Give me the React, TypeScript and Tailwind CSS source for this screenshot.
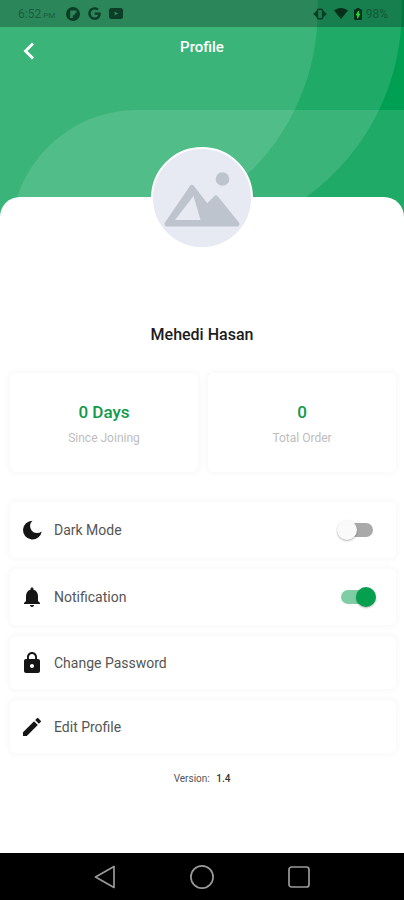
import { useState } from "react";
import type { ReactNode } from "react";
import { FaGoogle } from "react-icons/fa";
import { MdEdit, MdLock, MdNotifications } from "react-icons/md";

function StatusBar() {
  return (
    <div className="flex h-[27px] items-center justify-between bg-black/25 pl-[18px] pr-4 text-[#0c3d26]">
      <div className="flex items-center">
        <span className="w-12 text-xs text-[#1b5c3d]">
          6:52<span className="text-[8px]"> PM</span>
        </span>
        <svg viewBox="0 0 14 14" className="h-[14px] w-[14px]" aria-hidden="true">
          <circle cx="7" cy="7" r="7" fill="currentColor" />
          <path d="M4.2 11V3.6h6.3v2.6H8.7v2.1H6.8V11z" fill="#2c8659" />
        </svg>
        <FaGoogle className="ml-2 h-[13px] w-[13px]" />
        <svg viewBox="0 0 14 11" className="ml-2 h-[11px] w-[14px]" aria-hidden="true">
          <rect width="14" height="11" rx="2.5" fill="currentColor" />
          <path d="M5.6 3.4v4.2l3.6-2.1z" fill="#2c8659" />
        </svg>
      </div>
      <div className="flex items-center">
        <svg viewBox="0 0 14 12" className="h-3 w-[14px]" aria-hidden="true">
          <path d="M4.200 2.300V9.700L.2 6zM9.800 2.300V9.700L13.800 6z" fill="currentColor" />
          <rect x="4.400" y="1.200" width="5.200" height="9.600" rx="1.400" fill="none" stroke="currentColor" strokeWidth="1.600" />
        </svg>
        <svg viewBox="0 0 14 11" className="ml-[7px] h-[11px] w-[14px]" aria-hidden="true">
          <path d="M7 11L0 2.600C2 .9 4.400 0 7 0s5 .9 7 2.600z" fill="#06301b" />
        </svg>
        <svg viewBox="0 0 8 12" className="ml-[6px] h-3 w-2" aria-hidden="true">
          <path d="M2.500 0h3v1.300H7a1 1 0 0 1 1 1V11a1 1 0 0 1-1 1H1a1 1 0 0 1-1-1V2.300a1 1 0 0 1 1-1h1.500z" fill="#06301b" />
          <path d="M4.500 3L2.200 7h1.400v3.200L5.900 6H4.500z" fill="#20e22e" stroke="#20e22e" strokeWidth=".8" />
        </svg>
        <span className="ml-1 text-xs text-[#125a38]">98%</span>
      </div>
    </div>
  );
}

function Header() {
  return (
    <header className="relative h-[217px] overflow-hidden bg-[#009f52]">
      {/* decorative overlapping shapes */}
      <svg className="absolute inset-0 h-full w-full" viewBox="0 0 404 217" preserveAspectRatio="xMidYMin slice" aria-hidden="true">
        <g fill="#fff" fillOpacity=".12">
          <path d="M0 0H401.500A230 230 0 0 1 309 195L280 217H0z" />
          <path d="M0 0H317.500A227 227 0 0 1 252 170L190 217H0z" />
          <rect x="11" y="110" width="600" height="300" rx="126" />
        </g>
      </svg>
      <div className="relative">
        <StatusBar />
        <div className="grid grid-cols-[1fr_auto_1fr] px-5 pt-2">
          <button type="button" aria-label="Back" className="mt-[7px] flex h-[18px] w-[18px] items-center justify-center text-white">
            <svg viewBox="0 0 18 18" className="h-[18px] w-[18px]" fill="none" stroke="currentColor" strokeWidth="2.800" aria-hidden="true">
              <path d="M13 1.500L5.500 9l7.500 7.500" />
            </svg>
          </button>
          <h1 className="text-[15px] font-medium leading-6 text-white">Profile</h1>
        </div>
      </div>
    </header>
  );
}

function Avatar() {
  return (
    <div className="mx-auto -mt-[50px] h-[102px] w-[102px] overflow-hidden rounded-full border-2 border-white bg-[#e7eaf2]">
      <svg viewBox="0 0 98 98" className="h-full w-full" role="img" aria-label="Profile photo">
        <circle cx="69.500" cy="30" r="6.800" fill="#bec4cd" />
        {/* mountains, the left one with its middle cut out */}
        <path
          d="M39 38.500L54 58L63 49L84 75H14z"
          fill="#bec4cd"
          stroke="#bec4cd"
          strokeWidth="5"
          strokeLinejoin="round"
        />
        <path d="M40.500 47L22 71H47.500z" fill="#e7eaf2" />
      </svg>
    </div>
  );
}

const card = "rounded-md bg-white shadow-[0_0_6px_2px_rgba(0,0,0,0.03)]";

function StatCard({ value, label }: { value: string; label: string }) {
  return (
    <div className={`${card} flex h-[99px] flex-col items-center justify-center pt-1 text-center`}>
      <p className="text-[17px] font-medium leading-6 text-[#11994c]">{value}</p>
      <p className="mt-[2px] text-xs leading-6 text-[#bdbdbd]">{label}</p>
    </div>
  );
}

type SwitchRowProps = {
  icon: ReactNode;
  label: string;
  checked: boolean;
  onChange: (value: boolean) => void;
};

function SwitchRow({ icon, label, checked, onChange }: SwitchRowProps) {
  return (
    <label className={`${card} flex h-14 cursor-pointer items-center pl-[10px] pr-[23px]`}>
      {icon}
      <span className="ml-[10px] flex-1">{label}</span>
      <span className="relative flex h-5 w-8 items-center">
        <input
          type="checkbox"
          checked={checked}
          onChange={(e) => onChange(e.target.checked)}
          className="peer h-[14px] w-8 cursor-pointer appearance-none rounded-full bg-[#a9a9a9] checked:bg-[#7fcda5]"
        />
        <span className="pointer-events-none absolute -left-1 top-0 h-5 w-5 rounded-full bg-[#fafafa] shadow-[0_1px_2px_rgba(0,0,0,0.3)] transition-transform peer-checked:translate-x-[19px] peer-checked:bg-[#069f50]" />
      </span>
    </label>
  );
}

function LinkRow({ icon, label }: { icon: ReactNode; label: string }) {
  return (
    <button type="button" className={`${card} flex h-[53px] w-full items-center pl-[10px] text-left`}>
      {icon}
      <span className="ml-[10px]">{label}</span>
    </button>
  );
}

function MoonIcon() {
  return (
    <svg viewBox="0 0 24 24" className="h-6 w-6 text-[#151515]" aria-hidden="true">
      <path d="M12.500 2.700A9.400 9.400 0 1 0 21.700 13.400 6.400 6.400 0 0 1 12.500 2.700z" fill="currentColor" />
    </svg>
  );
}

function NavBar() {
  return (
    <nav className="flex h-[47px] items-center justify-center gap-[73px] bg-black text-[#9a9a9a]">
      <button type="button" aria-label="Back">
        <svg viewBox="0 0 24 24" className="h-6 w-6" fill="none" stroke="currentColor" strokeWidth="1.700" strokeLinejoin="round">
          <path d="M21 1.500v21L2.500 12z" />
        </svg>
      </button>
      <button type="button" aria-label="Home">
        <svg viewBox="0 0 24 24" className="h-6 w-6" fill="none" stroke="currentColor" strokeWidth="1.700">
          <circle cx="12" cy="12" r="11.100" />
        </svg>
      </button>
      <button type="button" aria-label="Recent apps">
        <svg viewBox="0 0 24 24" className="h-6 w-6" fill="none" stroke="currentColor" strokeWidth="1.700">
          <rect x="2" y="2" width="20" height="20" rx="2.500" />
        </svg>
      </button>
    </nav>
  );
}

export default function App() {
  const [darkMode, setDarkMode] = useState(false);
  const [notification, setNotification] = useState(true);

  return (
    <div className="flex min-h-screen flex-col bg-white font-['Roboto',sans-serif]">
      <Header />
      <main className="relative -mt-5 flex-1 rounded-t-[20px] bg-white pb-6">
        <Avatar />
        <h2 className="mt-[74px] text-center text-base font-medium leading-6 text-[#1c1c1c]">
          Mehedi Hasan
        </h2>
        <section className="mt-[26px] grid grid-cols-2 gap-[10px] pl-[10px] pr-2">
          <StatCard value="0 Days" label="Since Joining" />
          <StatCard value="0" label="Total Order" />
        </section>
        <section className="mt-[30px] flex flex-col gap-[11px] pl-[10px] pr-2 text-sm text-[#555]">
          <SwitchRow icon={<MoonIcon />} label="Dark Mode" checked={darkMode} onChange={setDarkMode} />
          <SwitchRow
            icon={<MdNotifications className="h-6 w-6 text-[#151515]" />}
            label="Notification"
            checked={notification}
            onChange={setNotification}
          />
          <LinkRow icon={<MdLock className="h-6 w-6 text-[#151515]" />} label="Change Password" />
          <LinkRow icon={<MdEdit className="h-6 w-6 text-[#151515]" />} label="Edit Profile" />
        </section>
        <p className="mt-[18px] text-center text-[10px] leading-4 text-[#555]">
          Version: <span className="ml-1 font-medium text-[#333]">1.4</span>
        </p>
      </main>
      <NavBar />
    </div>
  );
}
